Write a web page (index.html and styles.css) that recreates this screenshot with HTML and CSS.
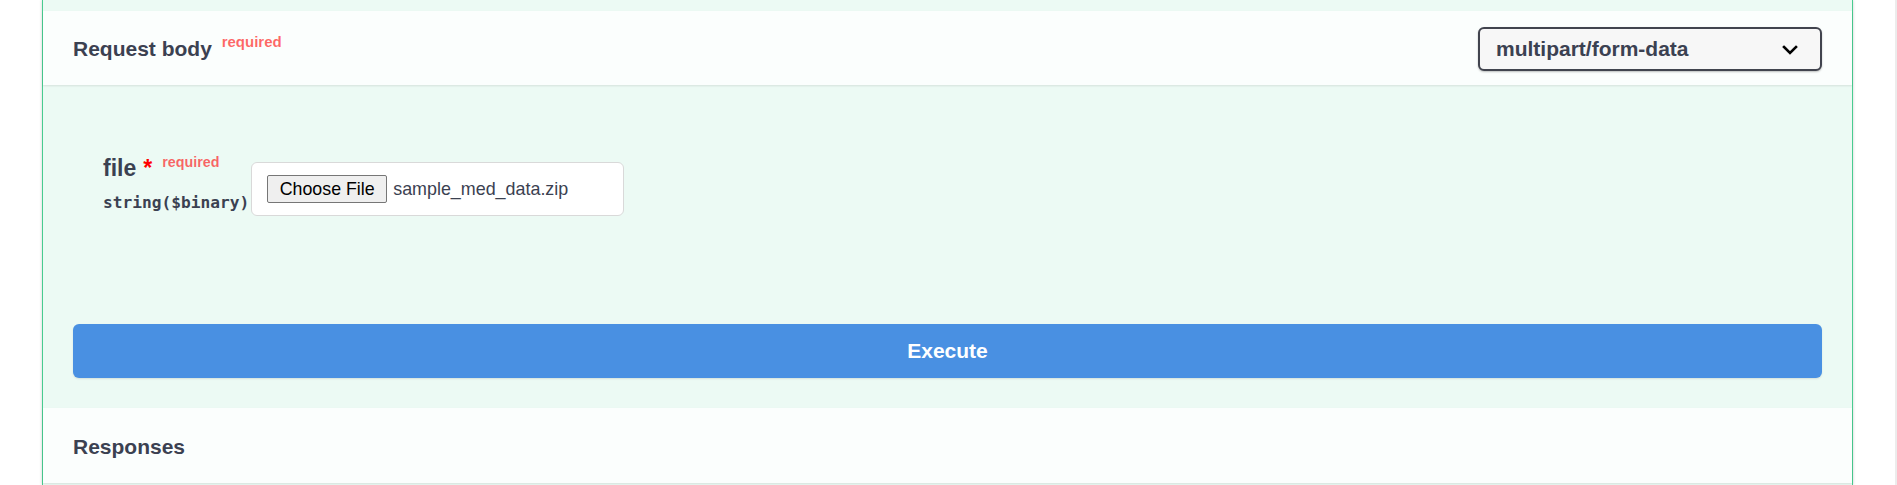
FILE: index.html
```html
<!DOCTYPE html>
<html lang="en">
<head>
<meta charset="utf-8">
<title>Request body</title>
<link rel="stylesheet" href="styles.css">
</head>
<body>
<div class="page">
  <div class="opblock">
    <div class="section-header">
      <h4 class="title">Request body <span class="hdr-req">required</span></h4>
      <div class="select">
        <span class="select-text">multipart/form-data</span>
        <svg class="chev" width="16" height="10" viewBox="0 0 16 10"><polyline points="2,2 8,8 14,2" fill="none" stroke="#000" stroke-width="2.6" stroke-linecap="square"/></svg>
      </div>
    </div>
    <div class="body">
      <div class="param-row">
        <div class="param-name">
          <div class="name">file<span class="star">*</span><span class="name-req">required</span></div>
          <div class="type">string($binary)</div>
        </div>
        <div class="file-input">
          <span class="choose">Choose File</span>
          <span class="fname">sample_med_data.zip</span>
        </div>
      </div>
      <button class="execute">Execute</button>
    </div>
    <div class="section-header responses">
      <h4 class="title">Responses</h4>
    </div>
  </div>
</div>
</body>
</html>
```

FILE: styles.css
```css
html, body {
  margin: 0;
  padding: 0;
  background: #fff;
}
body {
  font-family: "Liberation Sans", Arial, sans-serif;
  color: #3b4151;
  overflow: hidden;
}
.page {
  width: 1897px;
  box-sizing: border-box;
  height: 485px;
  padding: 0 42px;
  border-right: 2px solid #ececec;
  background: #fff;
}
.opblock {
  box-sizing: border-box;
  width: 1811px;
  border: 1px solid #49cc90;
  border-top: none;
  border-bottom: none;
  background: rgba(73, 204, 144, 0.1);
  box-shadow: 0 0 3px rgba(0, 0, 0, 0.19);
  padding-top: 11px;
  height: 485px;
}
.section-header {
  display: flex;
  align-items: center;
  justify-content: space-between;
  height: 74px;
  padding: 0 30px;
  background: rgba(255, 255, 255, 0.8);
  box-shadow: 0 1px 2px rgba(0, 0, 0, 0.1);
}
.title {
  margin: 0;
  font-size: 21px;
  font-weight: 700;
  line-height: 24px;
  color: #3b4151;
  padding-top: 3px;
}
.hdr-req {
  font-size: 15px;
  font-weight: 700;
  color: rgba(255, 0, 0, 0.6);
  position: relative;
  top: -9px;
  margin-left: 4px;
}
.select {
  box-sizing: border-box;
  width: 344px;
  height: 44px;
  border: 2px solid #41444e;
  border-radius: 6px;
  background: #f7f7f7;
  box-shadow: 0 1px 2px rgba(0, 0, 0, 0.25);
  display: flex;
  align-items: center;
  justify-content: space-between;
  padding: 0 22px 0 16px;
  margin-top: 1px;
}
.select-text {
  font-size: 21px;
  font-weight: 700;
  color: #3b4151;
}
.chev {
  display: block;
  margin-top: 2px;
}
.body {
  padding: 70px 30px 30px 30px;
}
.param-row {
  display: flex;
  align-items: flex-start;
  padding-left: 30px;
  height: 169px;
}
.param-name {
  display: flex;
  flex-direction: column;
}
.name {
  font-size: 23px;
  font-weight: 700;
  line-height: 26px;
  white-space: nowrap;
}
.star {
  color: #ff0000;
  margin-left: 7px;
}
.name-req {
  font-size: 14.3px;
  font-weight: 700;
  color: rgba(255, 0, 0, 0.6);
  position: relative;
  top: -9px;
  margin-left: 10px;
}
.type {
  margin-top: 9px;
  font-family: "DejaVu Sans Mono", "Liberation Mono", monospace;
  font-weight: 700;
  font-size: 16.2px;
  line-height: 20px;
  color: #3b4151;
  white-space: nowrap;
}
.file-input {
  box-sizing: border-box;
  width: 373px;
  height: 54px;
  margin-top: 7px;
  margin-left: 2px;
  border: 1px solid #d9d9d9;
  border-radius: 6px;
  background: #fff;
  display: flex;
  align-items: center;
  padding-left: 15px;
  gap: 6px;
}
.choose {
  box-sizing: border-box;
  width: 120px;
  height: 28px;
  border: 1px solid #767676;
  border-radius: 2px;
  background: #efefef;
  font-size: 17.8px;
  color: #000;
  display: flex;
  align-items: center;
  justify-content: center;
}
.fname {
  font-size: 17.9px;
  color: #3b4151;
}
.execute {
  display: block;
  width: 100%;
  height: 54px;
  border: none;
  border-radius: 6px;
  background: #4990e2;
  box-shadow: 0 1px 2px rgba(0, 0, 0, 0.1);
  color: #fff;
  font-family: "Liberation Sans", Arial, sans-serif;
  font-size: 21px;
  font-weight: 700;
  padding: 0;
}
.responses {
  height: 75px;
}
```
